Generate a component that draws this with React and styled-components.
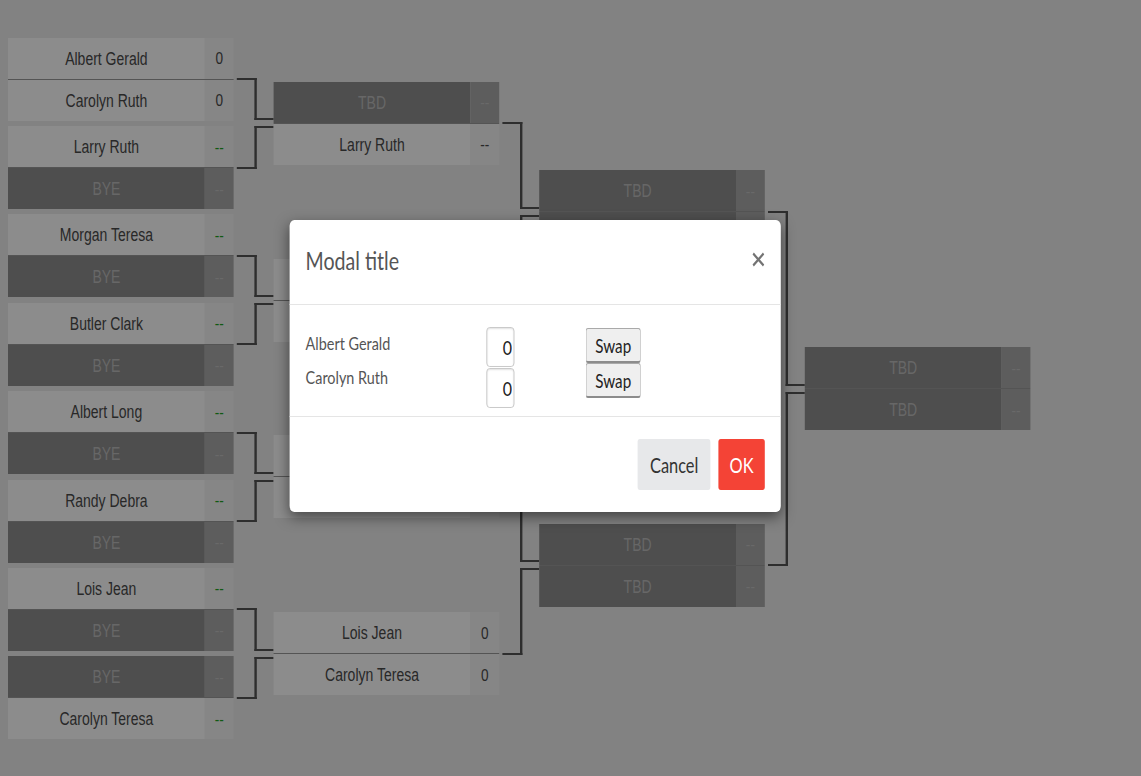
import styled, { createGlobalStyle, css } from "styled-components";

// the whole page is drawn on a canvas that is squeezed horizontally
const GlobalStyle = createGlobalStyle`
  *, *::before, *::after { box-sizing: border-box; }
  html, body {
    margin: 0;
    padding: 0;
    overflow: hidden;
    background: #ededed;
  }
  body {
    font-family: "Liberation Sans", Arial, sans-serif;
  }
`;

const Stage = styled.div`
  position: relative;
  width: 1427px;
  height: 776px;
  overflow: hidden;
  background: #ededed;
  transform: scaleX(0.8);
  transform-origin: 0 0;
`;

const Bracket = styled.div`
  display: flex;
  gap: 50px;
  padding: 35px 0 0 10px;
`;

const Round = styled.div`
  display: flex;
  flex-direction: column;
  width: 282px;
  height: 707px;
`;

const LINE = "#555";

const topConnector = css`
  &::before {
    content: "";
    position: absolute;
    left: 286px;
    width: 25px;
    top: calc(50% - 1px);
    bottom: 3px;
    border-top: 2px solid ${LINE};
    border-right: 3px solid ${LINE};
  }
  &::after {
    content: "";
    position: absolute;
    left: 308px;
    width: 24px;
    bottom: 3px;
    height: 2px;
    background: ${LINE};
  }
`;

const bottomConnector = css`
  &::before {
    content: "";
    position: absolute;
    left: 286px;
    width: 25px;
    top: 3px;
    bottom: calc(50% - 1px);
    border-bottom: 2px solid ${LINE};
    border-right: 3px solid ${LINE};
  }
  &::after {
    content: "";
    position: absolute;
    left: 308px;
    width: 24px;
    top: 3px;
    height: 2px;
    background: ${LINE};
  }
`;

const Slot = styled.div`
  flex: 1;
  position: relative;
  display: flex;
  align-items: center;
  ${(p) => p.$link === "top" && topConnector}
  ${(p) => p.$link === "bottom" && bottomConnector}
`;

const Match = styled.div`
  width: 282px;
  display: flex;
  flex-direction: column;
`;

const Row = styled.div`
  display: flex;
  height: ${(p) => (p.$first ? "42px" : "41px")};
  border-bottom: ${(p) => (p.$first ? "1px solid #9a9a9a" : "none")};
`;

const Name = styled.div`
  flex: 1;
  display: flex;
  align-items: center;
  justify-content: center;
  padding-top: 2px;
  font-size: 17.5px;
  color: ${(p) => (p.$empty ? "#bcbcbc" : "#4a4a4a")};
  background: ${(p) => (p.$empty ? "#8e8e8e" : "#ffffff")};
`;

const Score = styled.div`
  width: 36px;
  display: flex;
  align-items: center;
  justify-content: center;
  padding-top: 2px;
  font-size: 17px;
  color: ${(p) =>
    p.$empty ? "#c0c0c0" : p.$pending ? "#1fa424" : "#4a4a4a"};
  background: ${(p) => (p.$empty ? "#a9a9a9" : "#f4f4f4")};
`;

const Backdrop = styled.div`
  position: absolute;
  inset: 0;
  background: rgba(0, 0, 0, 0.45);
  padding: 220px 0 0 362px;
`;

const Dialog = styled.div`
  width: 614px;
  background: #fff;
  border-radius: 6px;
  box-shadow: 0 5px 15px rgba(0, 0, 0, 0.5);
  font-family: Lato, "Noto Sans", sans-serif;
`;

const Header = styled.div`
  height: 85px;
  display: flex;
  align-items: center;
  justify-content: space-between;
  padding: 0 20px 0 20px;
  border-bottom: 1px solid #e5e5e5;
`;

const Title = styled.h4`
  margin: -3px 0 0;
  font-size: 24.5px;
  font-weight: 400;
  color: #555;
`;

const Close = styled.button`
  border: 0;
  padding: 0;
  background: none;
  display: flex;
  margin-top: -5px;
  cursor: pointer;
`;

const Body = styled.div`
  display: grid;
  grid-template-columns: 226px 124px auto;
  padding: 22px 20px 8px;
`;

const Stack = styled.div`
  display: flex;
  flex-direction: column;
  gap: ${(p) => p.$gap || 0}px;
  margin-top: ${(p) => p.$offset || 0}px;
`;

const Label = styled.div`
  font-size: 18px;
  line-height: 34px;
  color: #555;
`;

const ScoreInput = styled.input`
  width: 35px;
  height: 40px;
  border: 1px solid #c4c4c4;
  border-radius: 4px;
  box-shadow: inset 0 1px 2px rgba(0, 0, 0, 0.12);
  padding: 0 2px 0 0;
  text-align: right;
  font-family: Lato, "Noto Sans", sans-serif;
  font-size: 20px;
  color: #222;
  -moz-appearance: textfield;
  &::-webkit-inner-spin-button,
  &::-webkit-outer-spin-button {
    -webkit-appearance: none;
    margin: 0;
  }
`;

const SwapButton = styled.button`
  width: 69px;
  height: 35px;
  padding: 0;
  border: 1px solid #a9a9a9;
  border-bottom: 2px solid #8c8c8c;
  border-radius: 3px;
  background: #efefef;
  font-family: Lato, "Noto Sans", sans-serif;
  font-size: 19px;
  color: #222;
`;

const Footer = styled.div`
  display: flex;
  justify-content: flex-end;
  gap: 10px;
  padding: 22px 20px;
  border-top: 1px solid #e5e5e5;
`;

const Button = styled.button`
  height: 51px;
  padding: 0 ${(p) => (p.$primary ? "14px" : "15px")};
  border: 0;
  border-radius: 3px;
  font-family: Lato, "Noto Sans", sans-serif;
  font-size: 20.5px;
  color: ${(p) => (p.$primary ? "#fff" : "#333")};
  background: ${(p) => (p.$primary ? "#f44336" : "#e7e8ea")};
`;

const BYE = { name: "BYE", score: "--", empty: true };
const TBD = { name: "TBD", score: "--", empty: true };
const waiting = (name) => ({ name, score: "--", pending: true });
const playing = (name) => ({ name, score: "0" });

const rounds = [
  [
    [playing("Albert Gerald"), playing("Carolyn Ruth")],
    [waiting("Larry Ruth"), BYE],
    [waiting("Morgan Teresa"), BYE],
    [waiting("Butler Clark"), BYE],
    [waiting("Albert Long"), BYE],
    [waiting("Randy Debra"), BYE],
    [waiting("Lois Jean"), BYE],
    [BYE, waiting("Carolyn Teresa")],
  ],
  [
    [TBD, { name: "Larry Ruth", score: "--" }],
    [playing("Morgan Teresa"), playing("Butler Clark")],
    [playing("Albert Long"), playing("Randy Debra")],
    [playing("Lois Jean"), playing("Carolyn Teresa")],
  ],
  [
    [TBD, TBD],
    [TBD, TBD],
  ],
  [[TBD, TBD]],
];

const MatchBox = ({ players }) => (
  <Match>
    {players.map((p, i) => (
      <Row key={i} $first={i === 0}>
        <Name $empty={p.empty}>{p.name}</Name>
        <Score $empty={p.empty} $pending={p.pending}>
          {p.score}
        </Score>
      </Row>
    ))}
  </Match>
);

const CloseIcon = () => (
  <svg width="16" height="15" viewBox="0 0 16 15">
    <path d="M1.5 1.5 L14.5 13.5 M14.5 1.5 L1.5 13.5" stroke="#737373" strokeWidth="2.4" fill="none" />
  </svg>
);

const App = () => {
  const last = rounds.length - 1;
  return (
    <>
      <GlobalStyle />
      <Stage>
        <Bracket>
          {rounds.map((matches, r) => (
            <Round key={r}>
              {matches.map((m, i) => (
                <Slot key={i} $link={r === last ? null : i % 2 === 0 ? "top" : "bottom"}>
                  <MatchBox players={m} />
                </Slot>
              ))}
            </Round>
          ))}
        </Bracket>
        <Backdrop>
          <Dialog>
            <Header>
              <Title>Modal title</Title>
              <Close aria-label="Close">
                <CloseIcon />
              </Close>
            </Header>
            <Body>
              <Stack $offset={-1}>
                <Label>Albert Gerald</Label>
                <Label>Carolyn Ruth</Label>
              </Stack>
              <Stack $gap={1}>
                <ScoreInput type="number" defaultValue={0} />
                <ScoreInput type="number" defaultValue={0} />
              </Stack>
              <Stack $offset={1}>
                <SwapButton>Swap</SwapButton>
                <SwapButton>Swap</SwapButton>
              </Stack>
            </Body>
            <Footer>
              <Button>Cancel</Button>
              <Button $primary>OK</Button>
            </Footer>
          </Dialog>
        </Backdrop>
      </Stage>
    </>
  );
};

export default App;
